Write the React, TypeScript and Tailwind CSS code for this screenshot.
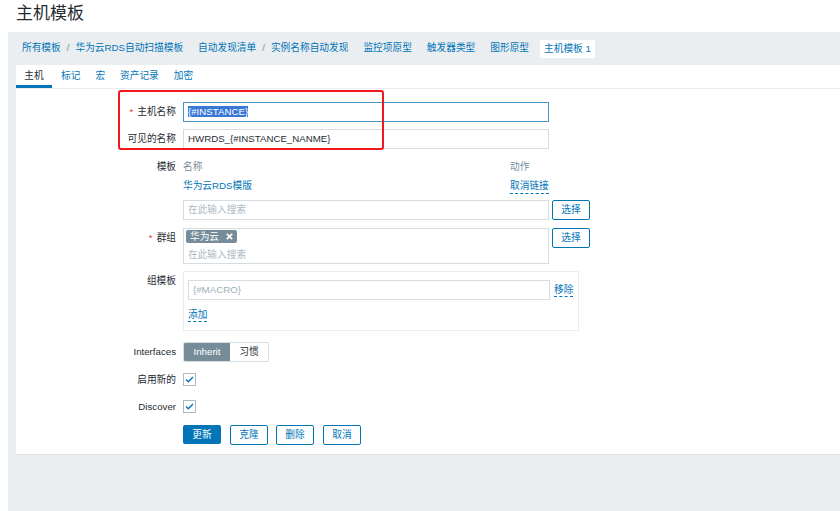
import React from 'react';

const font = { fontFamily: '"Liberation Sans", Arial, "Noto Sans CJK SC", sans-serif' };

const Label = ({ text, req }: { text: string; req?: boolean }) => (
  <div className="w-[167px] shrink-0 whitespace-nowrap pr-[7px] text-right leading-[19px] text-[#1f2c33]">
    {req && <span className="mr-[4px] text-[#e33734]">*</span>}
    {text}
  </div>
);

const Btn = ({ text }: { text: string }) => (
  <button className="h-[20px] w-[38px] rounded-[2px] border border-[#0275b8] bg-white text-[9.7px] leading-[18px] text-[#0275b8]">
    {text}
  </button>
);

const Check = () => (
  <div className="flex h-[13px] w-[13px] items-center justify-center border border-[#acbbc2] bg-white">
    <svg width="9" height="7" viewBox="0 0 10 8">
      <path d="M1 4l2.6 2.6L9 1.2" fill="none" stroke="#0275b8" strokeWidth="1.6" />
    </svg>
  </div>
);

export default function App() {
  return (
    <div className="h-[511px] w-[840px] overflow-hidden bg-white text-[9.7px] text-[#1f2c33]" style={font}>
      <div className="h-[32px] pl-[16px] pt-[3px] text-[17px] leading-[22px] text-[#1f2c33]">主机模板</div>
      <div className="ml-[8px] h-[479px] bg-[#ebeef0]">
        <div className="flex h-[33px] items-center whitespace-nowrap pl-[14px] text-[#0275b8]">
          <span>所有模板</span>
          <span className="mx-[6px] text-[#768d99]">/</span>
          <span>华为云RDS自动扫描模板</span>
          <span className="ml-[15px]">自动发现清单</span>
          <span className="mx-[6px] text-[#768d99]">/</span>
          <span>实例名称自动发现</span>
          <span className="ml-[15px]">监控项原型</span>
          <span className="ml-[15px]">触发器类型</span>
          <span className="ml-[15px]">图形原型</span>
          <span className="ml-[11px] bg-white px-[4px] leading-[18px]">主机模板 1</span>
        </div>
        <div className="ml-[8px] h-[390px] border-b border-[#dfe4e7] bg-white">
          <div className="flex h-[24px] items-end border-b border-[#ebeef0]">
            <div className="flex h-[23px] w-[36px] items-center justify-center border-b-[3px] border-[#0275b8] pt-[3px] text-[#1f2c33]">主机</div>
            <div className="flex h-[23px] items-center pl-[9px] text-[#0275b8]">标记</div>
            <div className="flex h-[23px] items-center pl-[15px] text-[#0275b8]">宏</div>
            <div className="flex h-[23px] items-center pl-[15px] text-[#0275b8]">资产记录</div>
            <div className="flex h-[23px] items-center pl-[15px] text-[#0275b8]">加密</div>
          </div>

          <div className="relative pt-[13px]">
            <div className="pointer-events-none absolute left-[102px] top-[1px] h-[60px] w-[266px] rounded-[3px] border-2 border-[#f0171d]" />

            <div className="flex">
              <Label text="主机名称" req />
              <div className="h-[20px] w-[366px] border border-[#4796c4] px-[4px] leading-[18px]">
                <span className="bg-[#3a78d6] text-white">{'{#INSTANCE}'}</span>
              </div>
            </div>
            <div className="mt-[7px] flex">
              <Label text="可见的名称" />
              <div className="h-[20px] w-[366px] border border-[#d6dde0] px-[4px] leading-[18px]">HWRDS_{'{#INSTANCE_NANME}'}</div>
            </div>

            <div className="mt-[11px] flex">
              <div className="w-[167px] shrink-0 pr-[7px] text-right leading-[14px]">模板</div>
              <div className="w-[408px]">
                <div className="flex h-[14px] w-[366px] justify-between leading-[14px] text-[#768d99]">
                  <span>名称</span>
                  <span className="w-[39px]">动作</span>
                </div>
                <div className="mt-[5px] flex h-[16px] w-[366px] items-start justify-between leading-[14px] text-[#0275b8]">
                  <span>华为云RDS模版</span>
                  <span className="w-[39px] whitespace-nowrap border-b border-dashed border-[#0275b8]">取消链接</span>
                </div>
                <div className="mt-[5px] flex gap-[3px]">
                  <div className="h-[20px] w-[366px] border border-[#d6dde0] px-[4px] leading-[18px] text-[#acbbc2]">在此输入搜索</div>
                  <Btn text="选择" />
                </div>
              </div>
            </div>

            <div className="mt-[8px] flex">
              <Label text="群组" req />
              <div className="flex gap-[3px]">
                <div className="h-[36px] w-[366px] border border-[#d6dde0] px-[2px] pt-[1px]">
                  <span className="inline-flex h-[13px] items-center gap-[7px] whitespace-nowrap rounded-[2px] bg-[#768d99] px-[4px] leading-[13px] text-white">
                    <span className="whitespace-nowrap">华为云</span>
                    <svg width="7" height="7" viewBox="0 0 8 8" className="shrink-0">
                      <path d="M1 1l6 6M7 1L1 7" stroke="white" strokeWidth="2" />
                    </svg>
                  </span>
                  <div className="mt-[3px] pl-[2px] leading-[14px] text-[#acbbc2]">在此输入搜索</div>
                </div>
                <Btn text="选择" />
              </div>
            </div>

            <div className="mt-[7px] flex">
              <Label text="组模板" />
              <div className="h-[60px] w-[396px] border border-[#ebeef0] px-[4px] pt-[8px]">
                <div className="flex items-center gap-[4px]">
                  <div className="h-[20px] w-[362px] border border-[#d6dde0] px-[4px] leading-[18px] text-[#9eafb7]">{'{#MACRO}'}</div>
                  <span className="whitespace-nowrap border-b border-dashed border-[#0275b8] leading-[13px] text-[#0275b8]">移除</span>
                </div>
                <span className="mt-[8px] inline-block border-b border-dashed border-[#0275b8] leading-[13px] text-[#0275b8]">添加</span>
              </div>
            </div>

            <div className="mt-[11px] flex">
              <Label text="Interfaces" />
              <div className="flex h-[20px] overflow-hidden rounded-[2px] border border-[#d6dde0]">
                <div className="w-[46px] bg-[#768d99] text-center leading-[18px] text-white">Inherit</div>
                <div className="w-[38px] bg-white text-center leading-[18px]">习惯</div>
              </div>
            </div>

            <div className="mt-[8px] flex h-[19px] items-center">
              <Label text="启用新的" />
              <Check />
            </div>
            <div className="mt-[8px] flex h-[19px] items-center">
              <Label text="Discover" />
              <Check />
            </div>

            <div className="mt-[9px] flex pl-[167px]">
              <button className="h-[19px] w-[38px] rounded-[2px] bg-[#0275b8] text-[9.7px] leading-[19px] text-white">更新</button>
              <div className="ml-[9px]"><Btn text="克隆" /></div>
              <div className="ml-[8px]"><Btn text="删除" /></div>
              <div className="ml-[9px]"><Btn text="取消" /></div>
            </div>
          </div>
        </div>
      </div>
    </div>
  );
}
